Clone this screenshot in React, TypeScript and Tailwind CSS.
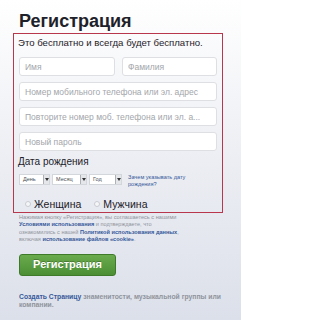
import React from "react"

function Field({ placeholder, className = "" }: { placeholder: string; className?: string }) {
  return (
    <input
      readOnly
      placeholder={placeholder}
      className={`h-[19px] rounded-[3px] border border-[#dddfe2] bg-white px-[5px] text-[8.5px] text-[#1d2129] outline-none placeholder:text-[#a3a6ab] ${className}`}
    />
  )
}

function FakeSelect({ label, width }: { label: string; width: string }) {
  return (
    <div className={`flex h-[11px] items-stretch border border-[#d3d6db] bg-white ${width}`}>
      <span className="flex-1 pl-[3px] text-[5.5px] leading-[9px] text-[#4b4f56]">{label}</span>
      <span className="flex w-[6px] items-center justify-center border-l border-[#aeb2b8] bg-[#e4e6ea]">
        <svg width="4" height="3" viewBox="0 0 4 3">
          <path d="M0 0h4L2 3z" fill="#333" />
        </svg>
      </span>
    </div>
  )
}

function Radio({ label }: { label: string }) {
  return (
    <label className="flex items-center gap-[3px]">
      <span className="h-[6px] w-[6px] rounded-full border border-[#c9ccd1] bg-[#f5f6f7]" />
      <span className="text-[10.5px] leading-[14px] text-[#1d2129]">{label}</span>
    </label>
  )
}

export default function App() {
  return (
    <div className="h-[320px] w-[241px] overflow-hidden bg-gradient-to-b from-white via-[#eceef3] to-[#dce0ea] font-['Liberation_Sans',Arial,sans-serif]">
      <div className="pl-[13px] pt-[10px]">
        <h1 className="ml-[6px] text-[18px] font-bold leading-[22px] text-[#1d2129]">Регистрация</h1>

        {/* Highlighted form block */}
        <div className="mt-px h-[180px] w-[210px] border-[1.5px] border-[#b8374c] px-[5px] pt-[3px]">
          <p className="-ml-px text-[9.6px] leading-[12px] text-[#1d2129]">Это бесплатно и всегда будет бесплатно.</p>

          <div className="mt-[8px] flex flex-col gap-[6px]">
            <div className="flex gap-[7px]">
              <Field placeholder="Имя" className="w-[96px]" />
              <Field placeholder="Фамилия" className="w-[95px]" />
            </div>
            <Field placeholder="Номер мобильного телефона или эл. адрес" className="w-[198px]" />
            <Field placeholder="Повторите номер моб. телефона или эл. а..." className="w-[198px]" />
            <Field placeholder="Новый пароль" className="w-[198px]" />
          </div>

          <div className="-ml-px mt-[5px] text-[10px] leading-[12px] text-[#1d2129]">Дата рождения</div>

          <div className="mt-[6px] flex items-start gap-[2px]">
            <FakeSelect label="День" width="w-[31px]" />
            <FakeSelect label="Месяц" width="w-[35px]" />
            <FakeSelect label="Год" width="w-[33px]" />
            <a className="ml-[4px] w-[70px] text-[5.6px] leading-[7px] text-[#365899]">
              Зачем указывать дату рождения?
            </a>
          </div>

          <div className="mt-[9px] flex gap-[13px] pl-[6px]">
            <Radio label="Женщина" />
            <Radio label="Мужчина" />
          </div>
        </div>

        <p className="ml-[6px] mt-px w-[170px] text-[5.6px] leading-[7.4px] text-[#90949c]">
          Нажимая кнопку «Регистрация», вы соглашаетесь с нашими{" "}
          <b className="text-[#365899]">Условиями использования</b> и подтверждаете, что ознакомились с нашей{" "}
          <b className="text-[#365899]">Политикой использования данных</b>, включая{" "}
          <b className="text-[#365899]">использование файлов «cookie»</b>.
        </p>

        <button className="ml-[6px] mt-[10px] h-[22px] w-[97px] rounded-[3px] border border-[#3f7a2a] bg-gradient-to-b from-[#6bab4e] to-[#4b8e33] text-[11px] font-bold text-white [text-shadow:0_-1px_0_rgba(0,0,0,0.25)]">
          Регистрация
        </button>

        <p className="ml-[6px] mt-[17px] w-[210px] text-[6.8px] font-bold leading-[8.5px] text-[#90949c]">
          <span className="text-[#365899]">Создать Страницу</span> знаменитости, музыкальной группы или компании.
        </p>
      </div>
    </div>
  )
}
